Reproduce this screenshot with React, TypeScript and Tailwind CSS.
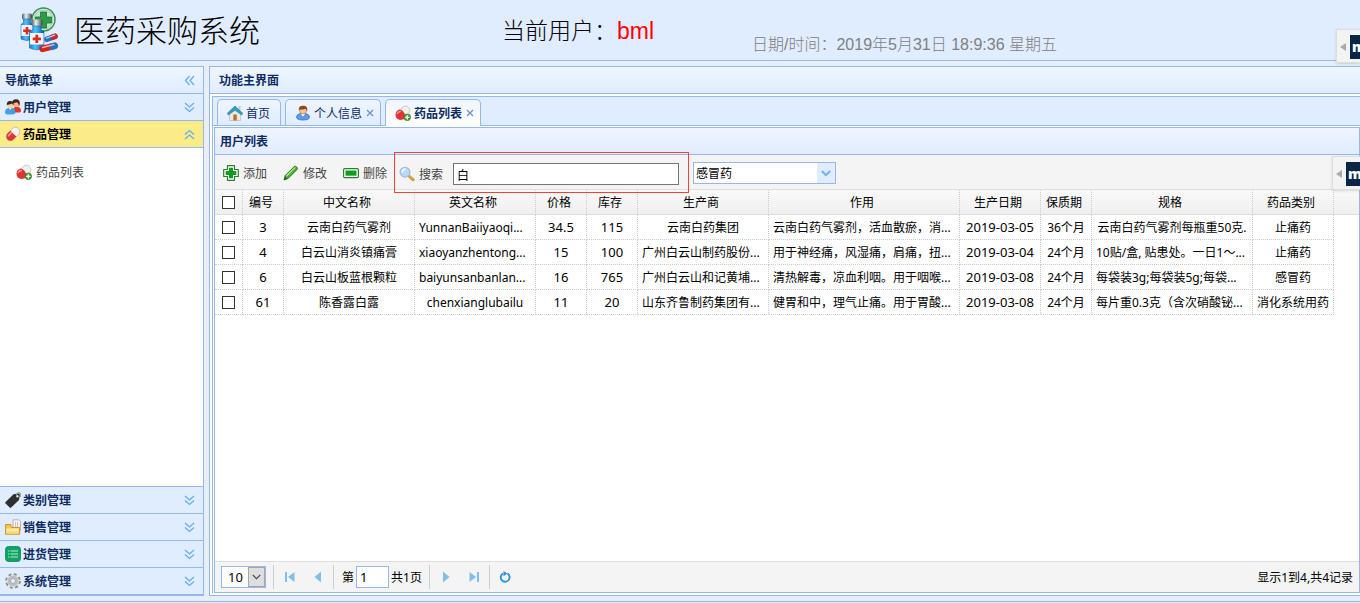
import { useState, type ReactNode } from "react";

const medicines = [
  ["3", "云南白药气雾剂", "YunnanBaiiyaoqi...", "34.5", "115", "云南白药集团", "云南白药气雾剂，活血散瘀，消...", "2019-03-05", "36个月", "云南白药气雾剂每瓶重50克.", "止痛药"],
  ["4", "白云山消炎镇痛膏", "xiaoyanzhentong...", "15", "100", "广州白云山制药股份...", "用于神经痛，风湿痛，肩痛，扭...", "2019-03-04", "24个月", "10贴/盒, 贴患处。一日1～...", "止痛药"],
  ["6", "白云山板蓝根颗粒", "baiyunsanbanlan...", "16", "765", "广州白云山和记黄埔...", "清热解毒，凉血利咽。用于咽喉...", "2019-03-08", "24个月", "每袋装3g;每袋装5g;每袋...", "感冒药"],
  ["61", "陈香露白露", "chenxianglubailu", "11", "20", "山东齐鲁制药集团有...", "健胃和中，理气止痛。用于胃酸...", "2019-03-08", "24个月", "每片重0.3克（含次硝酸铋...", "消化系统用药"],
];

const columns = [
  { title: "编号", width: "w-[41px]" },
  { title: "中文名称", width: "w-[131px]" },
  { title: "英文名称", width: "w-[121px]" },
  { title: "价格", width: "w-[51px]" },
  { title: "库存", width: "w-[51px]" },
  { title: "生产商", width: "w-[131px]" },
  { title: "作用", width: "w-[191px]" },
  { title: "生产日期", width: "w-[81px]" },
  { title: "保质期", width: "w-[51px]" },
  { title: "规格", width: "w-[161px]" },
  { title: "药品类别", width: "w-[81px]" },
];

const numericColumns = [0, 3, 4, 7];

function LogoIcon() {
  return (
    <svg viewBox="0 0 40 46" className="h-[46px] w-10 shrink-0" aria-hidden="true">
      <defs>
        <linearGradient id="bottle" x1="0" x2="1">
          <stop offset="0" stopColor="#1478cc" />
          <stop offset="0.4" stopColor="#4cc6ff" />
          <stop offset="1" stopColor="#0a559e" />
        </linearGradient>
        <linearGradient id="cap" x1="0" x2="1">
          <stop offset="0" stopColor="#4f575c" />
          <stop offset="0.4" stopColor="#eef0f1" />
          <stop offset="1" stopColor="#3f464a" />
        </linearGradient>
      </defs>
      <circle cx="23.500" cy="12.500" r="11.500" fill="#e8f5ec" stroke="#3d8f5a" strokeWidth="1.500" />
      <circle cx="23.500" cy="12.500" r="9.600" fill="#c3e4ce" stroke="#8fc9a5" strokeWidth="0.900" />
      <path d="M20.500 5h6v5h5v6h-5v5h-6v-5h-5v-6h5z" fill="#2c9c46" stroke="#12652b" strokeWidth="0.700" />
      <rect x="2" y="6.500" width="10" height="6" rx="1.500" fill="url(#cap)" />
      <path d="M3.500 12h7v3.500l2.500 2V32q-6 3-12 0V17.500l2.500-2z" fill="url(#bottle)" stroke="#0e5a9c" strokeWidth="0.500" />
      <rect x="1.300" y="18" width="11.400" height="11" fill="#e8f4ff" />
      <path d="M5.700 20h2.600v2.500h2.500v2.600H8.300v2.500H5.700v-2.500H3.200v-2.600h2.500z" fill="#e02a20" />
      <rect x="11.500" y="12.500" width="11" height="6.500" rx="1.500" fill="url(#cap)" />
      <path d="M13 19h8v3.500l3 2V41q-7 3.500-14.500 0V24.500l3.500-2z" fill="url(#bottle)" stroke="#0e5a9c" strokeWidth="0.500" />
      <rect x="10" y="26" width="13.600" height="11.500" fill="#eef7ff" />
      <path d="M15.400 27.700h2.800v2.700h2.700v2.800h-2.700v2.700h-2.800v-2.700h-2.700v-2.800h2.700z" fill="#e02a20" />
      <g transform="rotate(-20 31 31)">
        <rect x="24" y="28" width="14" height="5.500" rx="2.700" fill="#1f6fc0" />
        <path d="M31 28h4.300a2.700 2.700 0 0 1 0 5.500H31z" fill="#cf2620" />
        <rect x="26" y="29" width="10" height="1.200" rx="0.600" fill="#b5d8f7" />
      </g>
      <g transform="rotate(-14 29 40)">
        <rect x="19" y="37" width="19" height="6.500" rx="3.200" fill="#cf2620" />
        <path d="M30 37h4.800a3.200 3.200 0 0 1 0 6.500H30z" fill="#2474c6" />
        <rect x="22" y="38.200" width="13" height="1.400" rx="0.700" fill="#f8b4ae" />
      </g>
    </svg>
  );
}

function Icon({ children }: { children: ReactNode }) {
  return (
    <svg viewBox="0 0 16 16" className="size-4 shrink-0" aria-hidden="true">
      {children}
    </svg>
  );
}

const UsersIcon = () => (
  <Icon>
    <path d="M8.500 13.500V10q0-2 3-2.500Q16 8 16 11.500q0 1.500-1 2z" fill="#e2382a" />
    <circle cx="11" cy="4.300" r="3.500" fill="#f0b98a" />
    <path d="M7.300 4.500Q7 .3 11 .3t3.800 4.500q-.3 2-1 2.700.3-3.500-2.300-4.300-2 .8-4.200 1.300z" fill="#4a2413" />
    <path d="M0 13.500q0-4 3.500-4.500h3.200q3.800.5 3.800 4.500 0 2-5.300 2T0 13.500z" fill="#3f9fe8" />
    <path d="M3.800 9h2.800l-1.400 2z" fill="#fff" />
    <circle cx="5.200" cy="6" r="3.200" fill="#ffd29b" />
    <path d="M1.800 6Q1.500 2 5.200 2t3.500 4Q7.500 5.500 7 4.500 4 5.500 1.800 6z" fill="#39251a" />
  </Icon>
);

const PillIcon = () => (
  <Icon>
    <g transform="rotate(-45 8 8)">
      <rect x="0.200" y="3.800" width="15.600" height="8.400" rx="4.200" fill="#f2f2f2" stroke="#b5b5b5" strokeWidth="0.700" />
      <path d="M8.500 3.800H4.400a4.200 4.200 0 0 0 0 8.400h4.100z" fill="#dd3535" />
      <path d="M3.500 6h4" stroke="#f7a39c" strokeWidth="1.600" strokeLinecap="round" />
      <path d="M9.500 6h3" stroke="#fff" strokeWidth="1.600" strokeLinecap="round" />
    </g>
  </Icon>
);

const PillAddIcon = () => (
  <Icon>
    <path d="M4.500 5.500Q7 1 10.500 1T15 5.500q0 4-4.500 6z" fill="#efefef" stroke="#bcbcbc" strokeWidth="0.700" />
    <path d="M4.700 4.500q2.300.3 4 2.500t2 5.500Q8.500 15 5 15 .5 14 .5 9.800q.2-4.300 4.200-5.300z" fill="#dd3535" />
    <path d="M2.300 8.500q1-2 3-2" stroke="#f59a94" strokeWidth="1.500" fill="none" strokeLinecap="round" />
    <circle cx="12.300" cy="12.300" r="3.400" fill="#4f9a3a" stroke="#2f6e24" strokeWidth="0.500" />
    <path d="M12.300 10.200v4.200M10.200 12.300h4.200" stroke="#fff" strokeWidth="1.300" />
  </Icon>
);

const TagIcon = () => (
  <Icon>
    <path d="M8.500 2.200 14 1.500q1 .2.800 1.200L14 8 6.200 15.500q-.8.500-1.500 0L.6 11.400q-.7-.8 0-1.500z" fill="#2f2f2f" />
    <circle cx="12.300" cy="4.200" r="1.200" fill="#e0ecff" />
    <path d="M11.500 4.500Q10.500.8 13.500.5t2 4.500" fill="none" stroke="#8f8f8f" strokeWidth="1" />
  </Icon>
);

const FolderIcon = () => (
  <Icon>
    <path d="M8 .8h5.500l2 1.700v9H8z" fill="#f3f3f3" stroke="#a6a6a6" strokeWidth="0.800" />
    <path d="M10.500 3v6M12.500 3v6" stroke="#b9b9b9" strokeWidth="0.800" />
    <path d="M.6 5.500h5l1 3h8v6.700H.6z" fill="#f8c848" stroke="#c98a1c" strokeWidth="0.900" />
    <path d="M1.300 9.500h12.600v5H1.300z" fill="#fdeaa8" />
    <path d="M1.300 12.500h12.600v2H1.300z" fill="#fad46a" />
  </Icon>
);

const ListIcon = () => (
  <Icon>
    <rect x="0.500" y="0.500" width="15" height="15" rx="3" fill="#0fa464" stroke="#0a8550" strokeWidth="0.800" />
    <path d="M5.500 5h7.500M5.500 8h7.500M5.500 11h7.500M3 5h1.300M3 8h1.300M3 11h1.300" stroke="#b4efd0" strokeWidth="1.100" />
  </Icon>
);

const GearIcon = () => (
  <Icon>
    <circle cx="8" cy="8" r="6.400" fill="none" stroke="#8a8a8a" strokeWidth="2.800" strokeDasharray="2.700 2.330" />
    <circle cx="8" cy="8" r="4.200" fill="none" stroke="#bdbdbd" strokeWidth="3" />
    <circle cx="8" cy="8" r="5.700" fill="none" stroke="#dadada" strokeWidth="1" />
    <circle cx="8" cy="8" r="2.600" fill="#e0ecff" stroke="#909090" strokeWidth="0.700" />
  </Icon>
);

const HomeIcon = () => (
  <Icon>
    <path d="M11.500 1h2v5h-2z" fill="#c9c9c9" />
    <path d="M2.500 8 8 3.500 13.500 8v7.500h-11z" fill="#eeeae2" stroke="#b6b0a6" strokeWidth="0.600" />
    <rect x="6.300" y="9.500" width="3.500" height="6" fill="#b9702f" />
    <path d="M.2 8.300 8 1l7.800 7.300-1.300 1.800L8 5.300 1.500 10.100z" fill="#2f9dbd" stroke="#1b7896" strokeWidth="0.500" />
  </Icon>
);

const UserIcon = () => (
  <Icon>
    <path d="M1.500 12q.3-2.800 4-3.500h5q3.700.7 4 3.500 0 3-6.500 3t-6.500-3z" fill="#5c9cec" stroke="#2b66b8" strokeWidth="0.700" />
    <path d="m6 9 2 2.500L10 9z" fill="#fff" />
    <circle cx="8" cy="5.200" r="3.700" fill="#f6c791" stroke="#a8672f" strokeWidth="0.500" />
    <path d="M3.800 6Q3 .8 8 .7t4.200 5.300q-1-.5-1.400-2.200Q7 5 3.800 4.500z" fill="#8a4a1c" />
  </Icon>
);

const AddIcon = () => (
  <Icon>
    <path d="M4.500.7h7v3.800h3.800v7h-3.800v3.800h-7v-3.800H.7v-7h3.800z" fill="#fff" stroke="#2c7d2f" strokeWidth="1.200" strokeLinejoin="round" />
    <path d="M6 2.700h4V6h3.300v4H10v3.300H6V10H2.700V6H6z" fill="#119c1c" />
  </Icon>
);

const EditIcon = () => (
  <Icon>
    <path d="m1 15 1.300-4.500L11.200 1.600q1.200-.8 2.400.3t.5 2.500l-9 9z" fill="#4db035" stroke="#1f6e17" strokeWidth="0.900" strokeLinejoin="round" />
    <path d="m3.500 11 8.700-8.700" stroke="#b4ec96" strokeWidth="1.200" />
    <path d="m1 15 1-3.400 2.400 2.400z" fill="#305a22" />
  </Icon>
);

const RemoveIcon = () => (
  <Icon>
    <rect x="0.600" y="3.600" width="14.800" height="9" rx="1.200" fill="#fff" stroke="#2c7d2f" strokeWidth="1.200" />
    <rect x="2.500" y="5.500" width="11" height="5.200" fill="#119c1c" />
  </Icon>
);

const SearchIcon = () => (
  <Icon>
    <path d="m10.500 10.500 3.500 3.200" stroke="#d58a2c" strokeWidth="3" strokeLinecap="round" />
    <path d="m10.500 10 3.300 3" stroke="#f5c576" strokeWidth="1" strokeLinecap="round" />
    <circle cx="6" cy="6.200" r="4.900" fill="#b4dafc" stroke="#a9bccf" strokeWidth="1.300" />
    <path d="M3.300 6Q3.500 3.500 6 3.300" stroke="#fff" strokeWidth="1.400" fill="none" strokeLinecap="round" />
  </Icon>
);

function DoubleChevron({ direction }: { direction: "up" | "down" | "left" }) {
  const paths = {
    up: "m1 5.500 4.500-4 4.500 4M1 10l4.500-4L10 10",
    down: "m1 1 4.500 4L10 1M1 5.500l4.500 4 4.500-4",
    left: "M5.500 1l-4 4.500 4 4.500M10 1 6 5.500 10 10",
  };
  return (
    <svg viewBox="0 0 11 11" className="size-[11px] shrink-0" aria-hidden="true">
      <path d={paths[direction]} fill="none" stroke="#62b0ea" strokeWidth="1.300" />
    </svg>
  );
}

function MenuHeader({ icon, label, active = false }: { icon: ReactNode; label: string; active?: boolean }) {
  return (
    <button
      type="button"
      aria-expanded={active}
      className={`flex h-[27px] w-full shrink-0 items-center gap-0.5 border-b border-[#95b8e7] pr-2 pl-[5px] font-bold ${
        active ? "bg-[#fbec88] text-black" : "bg-[#e0ecff] text-[#0e2d5f]"
      }`}
    >
      {icon}
      <span className="flex-1 pt-0.5 text-left">{label}</span>
      <DoubleChevron direction={active ? "up" : "down"} />
    </button>
  );
}

function Sidebar() {
  return (
    <nav className="flex w-[204px] shrink-0 flex-col border-y border-r border-[#95b8e7] bg-white">
      <div className="flex h-[27px] shrink-0 items-center justify-between border-b border-[#95b8e7] bg-linear-to-b from-[#eff5ff] to-[#e0ecff] pr-2 pl-[5px] font-bold text-[#0e2d5f]">
        <h2 className="pt-0.5">导航菜单</h2>
        <button type="button" aria-label="折叠">
          <DoubleChevron direction="left" />
        </button>
      </div>
      <MenuHeader icon={<UsersIcon />} label="用户管理" />
      <MenuHeader icon={<PillIcon />} label="药品管理" active />
      <div className="flex-1 border-b border-[#95b8e7] px-4 py-[15px]">
        <a href="#list" className="flex items-center gap-1 text-[#444]">
          <PillAddIcon />
          <span className="pt-0.5">药品列表</span>
        </a>
      </div>
      <MenuHeader icon={<TagIcon />} label="类别管理" />
      <MenuHeader icon={<FolderIcon />} label="销售管理" />
      <MenuHeader icon={<ListIcon />} label="进货管理" />
      <MenuHeader icon={<GearIcon />} label="系统管理" />
    </nav>
  );
}

function Tab({ icon, label, active = false, closable = true }: { icon: ReactNode; label: string; active?: boolean; closable?: boolean }) {
  return (
    <div
      className={`flex items-center rounded-t-[5px] border border-b-0 border-[#95b8e7] bg-linear-to-b from-[#eff5ff] pl-[9px] text-[#0e2d5f] ${
        active ? "-mb-px to-white pb-px font-bold" : "to-[#e0ecff]"
      } ${closable ? "pr-1.5" : "pr-[10px]"}`}
    >
      <button type="button" role="tab" aria-selected={active} className="flex items-center gap-[3px]">
        {icon}
        <span className="pt-0.5">{label}</span>
      </button>
      {closable && (
        <button type="button" aria-label={`关闭${label}`} className="ml-1 flex size-2 items-center">
          <svg viewBox="0 0 8 8" className="size-2" aria-hidden="true">
            <path d="m1 1 6 6m0-6L1 7" stroke="#6b8fc7" strokeWidth="1.200" />
          </svg>
        </button>
      )}
    </div>
  );
}

function ToolButton({ icon, label }: { icon: ReactNode; label: string }) {
  return (
    <button type="button" className="flex items-center gap-1 text-[#444]">
      {icon}
      <span className="pt-0.5">{label}</span>
    </button>
  );
}

function Toolbar() {
  const [keyword, setKeyword] = useState("白");
  return (
    <div className="flex h-[35px] shrink-0 items-center border-b border-[#ddd] bg-[#f4f4f4] pt-0.5 pl-2">
      <div className="flex gap-4">
        <ToolButton icon={<AddIcon />} label="添加" />
        <ToolButton icon={<EditIcon />} label="修改" />
        <ToolButton icon={<RemoveIcon />} label="删除" />
      </div>
      <div className="relative ml-[7px] flex h-9 items-center pt-0.5 pr-2.5 pl-[5px]">
        <ToolButton icon={<SearchIcon />} label="搜索" />
        <input
          aria-label="搜索"
          value={keyword}
          onChange={(event) => setKeyword(event.target.value)}
          className="ml-[10px] h-[22px] w-[226px] border border-[#767676] bg-white px-[3px] pt-0.5 text-black outline-none"
        />
        <div className="pointer-events-none absolute inset-x-0 -top-[3px] -bottom-0.5 border border-[#ff3b3b]" />
      </div>
      <div className="relative ml-1 h-[22px] w-[143px] border border-[#95b8e7] bg-white">
        <select aria-label="药品类别" defaultValue="感冒药" className="size-full appearance-none pt-0.5 pr-5 pl-0.5 text-black outline-none">
          <option>感冒药</option>
          <option>止痛药</option>
          <option>消化系统用药</option>
        </select>
        <span className="pointer-events-none absolute inset-y-0 right-0 flex w-[18px] items-center justify-center bg-[#e0ecff]">
          <svg viewBox="0 0 10 7" className="h-[7px] w-2.5" aria-hidden="true">
            <path d="m.8 1 4.200 4.200L9.200 1" fill="none" stroke="#6cb4ee" strokeWidth="2" />
          </svg>
        </span>
      </div>
    </div>
  );
}

function RowCheckbox({ label }: { label: string }) {
  return (
    <input
      type="checkbox"
      aria-label={label}
      className="block size-[13px] appearance-none border border-[#333] bg-white checked:bg-[#333]"
    />
  );
}

function MedicineTable() {
  return (
    <div className="min-h-0 flex-1 overflow-hidden bg-white">
      <table className="w-full table-fixed border-separate border-spacing-0 text-black">
        <thead>
          <tr className="h-[25px] bg-linear-to-b from-[#f9f9f9] to-[#efefef]">
            <th className="w-7 border-r border-b border-r-[#ccc] border-b-[#ddd] p-0 pl-[7px] [border-right-style:dotted]">
              <RowCheckbox label="全选" />
            </th>
            {columns.map((column) => (
              <th
                key={column.title}
                className={`${column.width} border-r border-b border-r-[#ccc] border-b-[#ddd] p-0 pt-0.5 pr-1 font-normal [border-right-style:dotted]`}
              >
                {column.title}
              </th>
            ))}
            <th className="border-b border-[#ddd] p-0" />
          </tr>
        </thead>
        <tbody>
          {medicines.map((row) => (
            <tr key={row[0]} className="h-[25px]">
              <td className="border-r border-b border-dotted border-[#ccc] p-0 pl-[7px]">
                <RowCheckbox label={row[1]} />
              </td>
              {row.map((value, index) => (
                <td
                  key={index}
                  className={`overflow-hidden border-r border-b border-dotted border-[#ccc] whitespace-nowrap ${
                    numericColumns.includes(index) ? "p-0 text-[13px]" : "p-0 pt-0.5"
                  } ${value.endsWith("...") ? "pl-1 text-left" : "text-center"}`}
                >
                  {value}
                </td>
              ))}
            </tr>
          ))}
        </tbody>
      </table>
    </div>
  );
}

function PagerButton({ label, path }: { label: string; path: string }) {
  return (
    <button type="button" aria-label={label} className="flex size-4 items-center justify-center">
      <svg viewBox="0 0 12 12" className="size-3" aria-hidden="true">
        <path d={path} fill="#7fbfec" />
      </svg>
    </button>
  );
}

const Separator = () => <span className="h-6 w-px bg-[#ccc]" />;

function Pager() {
  const [page, setPage] = useState("1");
  return (
    <div className="flex h-[31px] shrink-0 items-center border-t border-[#ddd] bg-[#f4f4f4] px-1.5 text-black">
      <div className="relative h-[22px] w-[45px] border border-[#95b8e7] bg-white">
        <select aria-label="每页条数" defaultValue="10" className="size-full appearance-none pl-1.5 text-[13px] outline-none">
          <option>10</option>
          <option>20</option>
          <option>50</option>
        </select>
        <span className="pointer-events-none absolute inset-y-0 right-0 flex w-[17px] items-center justify-center border border-[#a5a5a5] bg-[#dedede]">
          <svg viewBox="0 0 9 6" className="h-1.5 w-[9px]" aria-hidden="true">
            <path d="M.7.800 4.500 4.600 8.300.800" fill="none" stroke="#444" strokeWidth="1.100" />
          </svg>
        </span>
      </div>
      <div className="ml-[7px] flex items-center gap-[7px]">
        <Separator />
        <div className="flex gap-3 pl-px">
          <PagerButton label="首页" path="M1 1h2v10H1zM10.500 1v10L4 6z" />
          <PagerButton label="上一页" path="M9 .500v11L2.500 6z" />
        </div>
        <Separator />
        <label className="flex items-center gap-0.5 pl-px">
          <span className="pt-0.5">第</span>
          <input
            value={page}
            onChange={(event) => setPage(event.target.value)}
            className="h-[22px] w-[33px] border border-[#95b8e7] bg-white px-[3px] text-[13px] outline-none"
          />
          <span className="pt-0.5">共1页</span>
        </label>
        <Separator />
        <div className="flex gap-3 pl-px">
          <PagerButton label="下一页" path="M3 .500v11L9.500 6z" />
          <PagerButton label="末页" path="M9 1h2v10H9zM1.500 1v10L8 6z" />
        </div>
        <Separator />
        <button type="button" aria-label="刷新" className="flex size-4 items-center justify-center">
          <svg viewBox="0 0 12 12" className="size-3" aria-hidden="true">
            <path d="M8.500 2.600A4.400 4.400 0 1 1 4 2.500" fill="none" stroke="#2a8fd6" strokeWidth="1.800" />
            <path d="M4.500 0v5.200L8.300 2.600z" fill="#2a8fd6" />
          </svg>
        </button>
      </div>
      <p className="ml-auto pt-0.5">显示1到4,共4记录</p>
    </div>
  );
}

function SideWidget({ className }: { className: string }) {
  return (
    <aside className={`absolute right-0 flex h-[34px] items-center overflow-hidden border-y border-l border-[#ddd] bg-[#f3f3f3] pt-0.5 pl-[3px] shadow-sm ${className}`}>
      <button type="button" aria-label="展开">
        <svg viewBox="0 0 6 8" className="h-2 w-1.5" aria-hidden="true">
          <path d="M6 0v8L0 4z" fill="#aaa" />
        </svg>
      </button>
      <span className="ml-1 flex h-6 flex-1 items-center overflow-hidden bg-[#0b2545] pl-0.5 font-['Open_Sans',sans-serif] text-[14px] font-extrabold text-white">
        me
      </span>
    </aside>
  );
}

export default function App() {
  return (
    <div className="relative flex min-h-screen flex-col overflow-hidden bg-[#e6eef8] font-['Noto_Sans','Noto_Sans_CJK_SC',sans-serif] text-[12px] leading-4">
      <header className="flex h-[61px] shrink-0 items-center border-b border-[#95b8e7] bg-[#e0ecff] pl-5 font-['Liberation_Sans','Noto_Sans_CJK_SC',sans-serif] text-black">
        <LogoIcon />
        <h1 className="ml-3.5 w-[428px] pt-1 text-[31px] leading-10 font-light">医药采购系统</h1>
        <p className="flex w-[250px] pt-0.5 text-[23px] leading-8 font-light">
          <span>当前用户：</span>
          <span className="font-normal text-[#f00]">bml</span>
        </p>
        <p className="pt-[30px] text-[16px] leading-6 font-light text-[#808080]">日期/时间：2019年5月31日 18:9:36 星期五</p>
      </header>

      <div className="mt-[5px] flex flex-1 gap-[5px]">
        <Sidebar />
        <main className="flex min-w-0 flex-1 flex-col border-y border-l border-[#95b8e7] bg-white">
          <h2 className="flex h-[27px] shrink-0 items-center border-b border-[#95b8e7] bg-linear-to-b from-[#eff5ff] to-[#e0ecff] pt-0.5 pl-[9px] font-bold text-[#0e2d5f]">
            功能主界面
          </h2>
          <div className="mt-0.5 mb-0.5 ml-0.5 flex flex-1 flex-col border-t border-l border-[#95b8e7]">
            <div role="tablist" className="flex h-[29px] shrink-0 gap-1 border-b border-[#95b8e7] bg-[#e0ecff] pt-0.5 pl-1">
              <Tab icon={<HomeIcon />} label="首页" closable={false} />
              <Tab icon={<UserIcon />} label="个人信息" />
              <Tab icon={<PillAddIcon />} label="药品列表" active />
            </div>
            <section className="mt-px ml-px flex flex-1 flex-col border border-[#95b8e7]">
              <h3 className="flex h-[27px] shrink-0 items-center border-b border-[#95b8e7] bg-linear-to-b from-[#eff5ff] to-[#e0ecff] pt-0.5 pl-[5px] font-bold text-[#0e2d5f]">
                用户列表
              </h3>
              <Toolbar />
              <MedicineTable />
              <Pager />
            </section>
          </div>
        </main>
      </div>

      <footer className="mt-[5px] h-0.5 shrink-0 border-t border-[#95b8e7] bg-[#e0ecff]" />

      <SideWidget className="top-[29px] w-6" />
      <SideWidget className="top-[156px] w-7" />
    </div>
  );
}
